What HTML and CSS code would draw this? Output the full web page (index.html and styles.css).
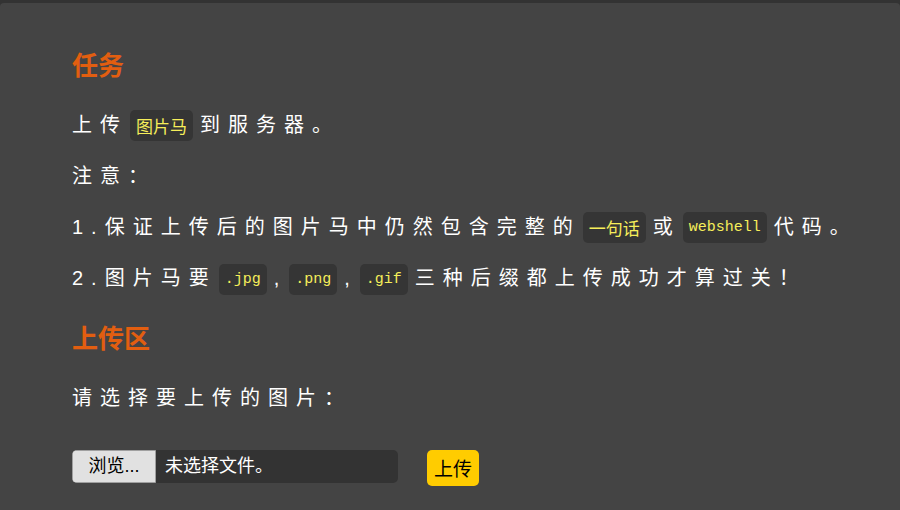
FILE: index.html
```
<!DOCTYPE html>
<html lang="zh-CN">
<head>
<meta charset="UTF-8">
<title>上传图片马</title>
<link rel="stylesheet" href="styles.css">
</head>
<body>
    <div class="panel">
        <h2 class="title">任务</h2>
        <p class="line">上传<code class="code cn">图片马</code>到服务器。</p>
        <p class="line">注意：</p>
        <p class="line">1.保证上传后的图片马中仍然包含完整的<code class="code cn">一句话</code>或<code class="code">webshell</code>代码。</p>
        <p class="line last">2.图片马要<code class="code">.jpg</code>,<code class="code">.png</code>,<code class="code">.gif</code>三种后缀都上传成功才算过关！</p>

        <h2 class="title">上传区</h2>
        <p class="line">请选择要上传的图片：</p>
        <form class="upload_row">
            <label class="file_box">
                <span class="file_btn">浏览...</span>
                <span class="file_name">未选择文件。</span>
            </label>
            <button type="button" class="submit_btn">上传</button>
        </form>
    </div>
</body>
</html>
```

FILE: styles.css
```
body{
    margin: 0px;
    background-color: #333;
    font-family: "Liberation Sans", "Noto Sans CJK SC", sans-serif;
}
.panel{
    margin-top: 3px;
    background-color: #444;
    border-radius: 4px 4px 0 0;
    padding: 48px 0 0 72px;
    min-height: 507px;
    box-sizing: border-box;
}
.title{
    margin: 0 0 27px;
    color: #e25e10;
    font-size: 26px;
    line-height: 31px;
    font-weight: bold;
}
.line{
    margin: 0 0 19px;
    color: #fff;
    font-size: 20px;
    line-height: 32px;
    letter-spacing: 8px;
    white-space: nowrap;
}
.line.last{
    margin-bottom: 29px;
}
.code{
    display: inline-block;
    vertical-align: middle;
    margin: -2px 7px 0 2px;
    padding: 6px 6px;
    line-height: 19px;
    background-color: #353535;
    color: #f6ee5a;
    border-radius: 5px;
    font-family: "Liberation Mono", "Noto Sans CJK SC", monospace;
    font-size: 15px;
    letter-spacing: 0;
}
.code.cn{
    font-size: 17px;
    font-family: "Noto Sans CJK SC", sans-serif;
}
.upload_row{
    display: flex;
    align-items: flex-start;
    gap: 29px;
    margin-top: 36px;
}
.file_box{
    display: flex;
    width: 326px;
    height: 33px;
    background-color: #333;
    border-radius: 5px;
    font-size: 18px;
    overflow: hidden;
}
.file_btn{
    width: 84px;
    box-sizing: border-box;
    background-color: #e1e1e1;
    border: 1px solid #a0a0a0;
    border-radius: 3px 0 0 3px;
    color: #000;
    text-align: center;
    line-height: 31px;
}
.file_name{
    padding-left: 9px;
    color: #fff;
    line-height: 33px;
}
.submit_btn{
    height: 36px;
    padding: 0 7px;
    border: none;
    border-radius: 5px;
    background-color: #ffcc00;
    color: #000;
    font-family: "Noto Sans CJK SC", sans-serif;
    font-size: 19px;
}
```
